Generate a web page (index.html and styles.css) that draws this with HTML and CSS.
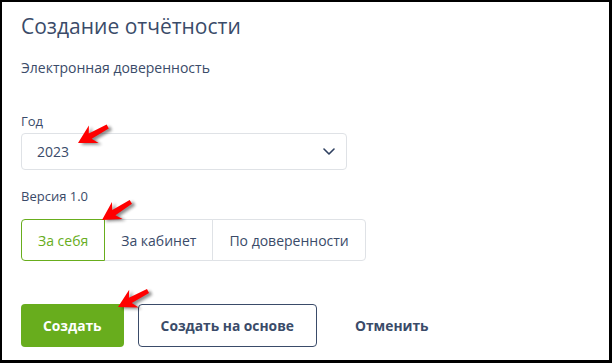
FILE: index.html
```html
<!DOCTYPE html>
<html lang="ru">
<head>
    <meta charset="UTF-8">
    <meta name="viewport" content="width=device-width, initial-scale=1.0">
    <title>Создание отчётности</title>
    <link rel="stylesheet" href="styles.css">
</head>
<body>
    <div class="panel">
        <h1>Создание отчётности</h1>
        <p class="subtitle">Электронная доверенность</p>

        <label class="field-label" for="year">Год</label>
        <div class="select" id="year">
            <span>2023</span>
            <svg class="chevron" width="12" height="7" viewBox="0 0 12 7">
                <path d="M1 1 L6 6 L11 1" fill="none" stroke="#2f4060" stroke-width="1.6" stroke-linecap="round" stroke-linejoin="round"/>
            </svg>
        </div>

        <div class="field-label version">Версия 1.0</div>
        <div class="segmented">
            <button class="segment active">За себя</button>
            <button class="segment">За кабинет</button>
            <button class="segment">По доверенности</button>
        </div>

        <div class="actions">
            <button class="btn btn-primary">Создать</button>
            <button class="btn btn-outline">Создать на основе</button>
            <button class="btn btn-link">Отменить</button>
        </div>
    </div>

    <!-- стрелки-пометки поверх формы -->
    <svg class="marks" width="612" height="363" viewBox="0 0 612 363">
        <defs>
            <filter id="blur" x="-50%" y="-50%" width="200%" height="200%">
                <feGaussianBlur stdDeviation="1.5"/>
            </filter>
            <polygon id="arrow" points="0,0 -18,-10 -14,-3 -34,-2.2 -34,2.2 -14,3 -18,10"/>
        </defs>
        <g transform="translate(78 143) rotate(151)">
            <use href="#arrow" fill="#000" opacity="0.45" filter="url(#blur)" transform="translate(-2 -3)"/>
            <use href="#arrow" fill="#ff0000"/>
        </g>
        <g transform="translate(102 220) rotate(148)">
            <use href="#arrow" fill="#000" opacity="0.45" filter="url(#blur)" transform="translate(-2 -3)"/>
            <use href="#arrow" fill="#ff0000"/>
        </g>
        <g transform="translate(118 307) rotate(152)">
            <use href="#arrow" fill="#000" opacity="0.45" filter="url(#blur)" transform="translate(-2 -3)"/>
            <use href="#arrow" fill="#ff0000"/>
        </g>
    </svg>
</body>
</html>
```

FILE: styles.css
```css
:root {
    --text-color: #3a4b69;
    --green: #68ad1d;
    --border-color: #dfe2e6;
}

* {
    box-sizing: border-box;
    margin: 0;
    padding: 0;
}

body {
    font-family: 'Open Sans', 'Noto Sans', sans-serif;
    color: var(--text-color);
    background: #fff;
    position: relative;
}

.panel {
    height: 363px;
    border-style: solid;
    border-color: #000;
    border-width: 2px 3px 3px 2px;
    padding: 0 19px;
}

h1 {
    font-size: 21px;
    font-weight: 400;
    line-height: 30px;
    margin-top: 9px;
}

.subtitle {
    font-size: 14px;
    line-height: 20px;
    margin-top: 17px;
}

.field-label {
    display: block;
    font-size: 13px;
    line-height: 18px;
    margin-top: 34px;
}

.select {
    width: 326px;
    height: 37px;
    margin-top: 3px;
    border: 1px solid var(--border-color);
    border-radius: 4px;
    display: flex;
    align-items: center;
    justify-content: space-between;
    padding: 0 11px 0 15px;
    font-size: 14px;
}

.version {
    margin-top: 17px;
}

.segmented {
    display: flex;
    margin-top: 14px;
}

.segment {
    font-family: inherit;
    font-size: 14px;
    color: var(--text-color);
    background: #fff;
    height: 42px;
    padding: 0 16px;
    border: 1px solid var(--border-color);
    margin-left: -1px;
    cursor: pointer;
}

.segment:first-child {
    margin-left: 0;
    border-radius: 4px 0 0 4px;
}

.segment:last-child {
    border-radius: 0 4px 4px 0;
}

.segment.active {
    color: var(--green);
    border-color: var(--green);
    position: relative;
}

.actions {
    display: flex;
    gap: 14px;
    margin-top: 43px;
}

.btn {
    font-family: inherit;
    font-size: 13.8px;
    font-weight: 700;
    height: 43px;
    padding: 0 21px;
    border-radius: 4px;
    border: 1px solid transparent;
    background: none;
    cursor: pointer;
}

.btn-primary {
    background: var(--green);
    color: #fff;
}

.btn-outline {
    padding: 0 22px;
    border-color: #3a4b69;
    color: var(--text-color);
}

.btn-link {
    padding: 0 23px;
    color: var(--text-color);
}

.marks {
    position: absolute;
    left: 0;
    top: 0;
    pointer-events: none;
}
```
